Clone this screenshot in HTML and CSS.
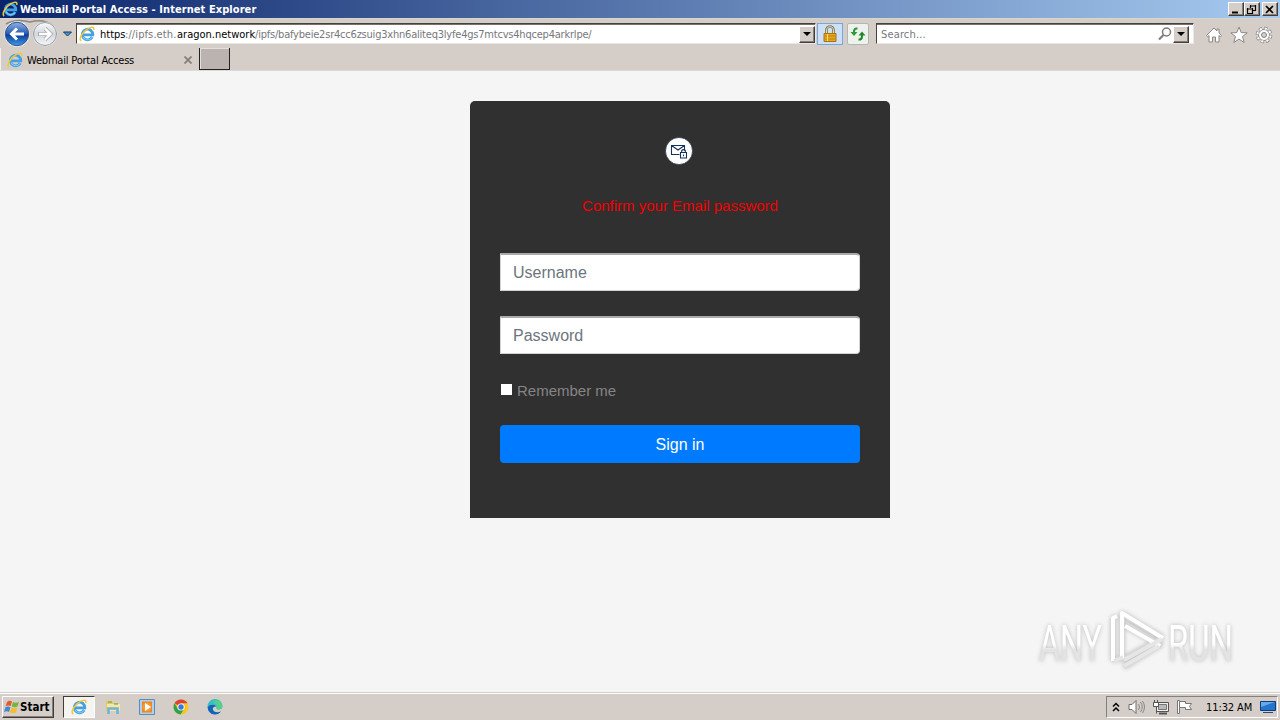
FILE: index.html
```html
<!DOCTYPE html>
<html lang="en">
<head>
    <meta charset="UTF-8">
    <meta name="viewport" content="width=device-width, initial-scale=1.0">
    <title>Webmail Portal Access</title>
    <link rel="stylesheet" href="styles.css">
</head>
<body>

    <!-- shared icons -->
    <svg class="defs">
        <symbol id="ie" viewBox="0 0 16 16">
            <path d="M13.200 11A5.300 5.300 0 1 1 13.800 8.900H4.500" fill="none" stroke="#45a0e2" stroke-width="2.800"/>
            <path d="M13 11.500A5.200 5.200 0 0 1 4 10.700" fill="none" stroke="#7fd0f6" stroke-width="1.100"/>
            <path d="M2.200 15C-.8 13.4 3.4 5.800 9 2.600C12.400.700 15.400.400 14.800 3.800" fill="none" stroke="#efc93a" stroke-width="1.600"/>
        </symbol>
    </svg>

    <header class="title-bar">
        <svg class="ie-icon"><use href="#ie"/></svg>
        <h1>Webmail Portal Access - Internet Explorer</h1>
        <div class="window-buttons">
            <button><svg viewBox="0 0 13 11"><path d="M3 8.500h6" stroke="#000" stroke-width="2"/></svg></button>
            <button><svg viewBox="0 0 13 11"><path d="M5 2h6M5.500 1v3M10.500 1v6M8 6.500h3M2 5h6M2.500 4v6M7.500 4v6M2 9.500h6" fill="none" stroke="#000" stroke-width="1.200"/></svg></button>
            <button class="close"><svg viewBox="0 0 13 11"><path d="M3 2l7 7M10 2l-7 7" stroke="#000" stroke-width="1.700"/></svg></button>
        </div>
    </header>

    <nav class="toolbar">
        <svg class="back-forward" viewBox="2 0 74 30">
            <defs>
                <linearGradient id="blue" x1="0" y1="0" x2="0" y2="1">
                    <stop offset="0" stop-color="#8fb2e2"/>
                    <stop offset=".45" stop-color="#2f62b5"/>
                    <stop offset=".55" stop-color="#0d3f9c"/>
                    <stop offset="1" stop-color="#3f9be6"/>
                </linearGradient>
                <linearGradient id="pale" x1="0" y1="0" x2="0" y2="1">
                    <stop offset="0" stop-color="#fafafa"/>
                    <stop offset=".5" stop-color="#d3d7dc"/>
                    <stop offset="1" stop-color="#f4f8fb"/>
                </linearGradient>
            </defs>
            <path d="M6 5Q16-1 30 3Q44-1 54 7" fill="none" stroke="#8b8885" stroke-width="1.500"/>
            <circle cx="17" cy="15" r="12.700" fill="#f4f6f8"/>
            <circle cx="17" cy="15" r="11.700" fill="url(#blue)" stroke="#31548c"/>
            <path d="M24 15H11.500M17 9.500L11.500 15l5.500 5.500" fill="none" stroke="#fff" stroke-width="3"/>
            <circle cx="45" cy="15" r="12.300" fill="#f1f1f0"/>
            <circle cx="45" cy="15" r="11.500" fill="url(#pale)" stroke="#92999f"/>
            <path d="M38 15H50.500M45 9.500L50.500 15 45 20.500" fill="none" stroke="#a9adb2" stroke-width="4"/>
            <path d="M39 15H50.500M45 9.500L50.500 15 45 20.500" fill="none" stroke="#fff" stroke-width="2.400"/>
            <path d="M63.500 13h8l-4 4z" fill="#419ad8" stroke="#17375c"/>
        </svg>
        <div class="address">
            <svg class="ie-icon"><use href="#ie"/></svg>
            <div class="url"><span class="scheme">https</span><span class="sub">://ipfs.eth.</span><span class="host">aragon.network</span><span class="path">/ipfs/bafybeie2sr4cc6zsuig3xhn6aliteq3lyfe4gs7mtcvs4hqcep4arkrlpe/</span></div>
            <button class="drop"></button>
        </div>
        <button class="lock">
            <svg viewBox="0 0 16 18"><path d="M4.500 9V5a3.500 3.500 0 0 1 7 0v4" fill="none" stroke="#7c7250" stroke-width="2.600"/><path d="M4.500 9V5a3.500 3.500 0 0 1 7 0v4" fill="none" stroke="#e5d9a6"/><path d="M2 8.500h12v8H2z" fill="#e8a81e" stroke="#a87210"/><path d="M2.500 11h11M2.500 14h11" stroke="#bd7e0e"/><path d="M5.500 9v7" stroke="#ffdc70"/></svg>
        </button>
        <button class="refresh">
            <svg viewBox="0 0 16 16"><path d="M7.500 2.500Q4.500 2 4 5v2" fill="none" stroke="#2c9a35" stroke-width="2"/><path d="M.500 6h7L4 10z" fill="#2c9a35"/><path d="M8.500 13.500Q11.500 14 12 11V9" fill="none" stroke="#23882c" stroke-width="2"/><path d="M8.500 9.500h7L12 5.500z" fill="#23882c"/></svg>
        </button>
        <div class="search">
            <span>Search...</span>
            <svg viewBox="0 0 14 14"><circle cx="8.500" cy="5" r="4" fill="#fafafa" stroke="#7c7c7c" stroke-width="1.500"/><path d="M5.500 8L1 12.500" stroke="#7c7c7c" stroke-width="2.200"/></svg>
            <button class="drop"></button>
        </div>
        <div class="tools">
            <svg viewBox="0 0 18 18"><path d="M1.500 9.500L9 2l3 3V3h2v4l2.500 2.500-1 1.200L14 9.500V16h-3.500v-5h-3v5H4V9.500l-1.300 1.200z" fill="#fff" stroke="#8b8885"/></svg>
            <svg viewBox="0 0 18 18"><path d="M9 1l2.200 5.600 6 .2-4.700 3.800 1.700 5.900L9 13.100l-5.200 3.400 1.700-5.900L.800 6.800l6-.2z" fill="#fff" stroke="#8b8885"/></svg>
            <svg viewBox="0 0 18 18"><circle cx="9" cy="9" r="6.800" fill="none" stroke="#85827f" stroke-width="3" stroke-dasharray="3.200 2.140"/><circle cx="9" cy="9" r="5.500" fill="#fff" stroke="#8b8885"/><circle cx="9" cy="9" r="6.600" fill="none" stroke="#fff" stroke-width="2" stroke-dasharray="2.200 2.984" stroke-dashoffset="-.500"/><circle cx="9" cy="9" r="2.500" fill="#d5cec7" stroke="#85827f"/></svg>
        </div>
    </nav>

    <div class="tabs">
        <div class="tab">
            <svg class="ie-icon"><use href="#ie"/></svg>
            <span>Webmail Portal Access</span>
            <svg class="tab-close" viewBox="0 0 8 8"><path d="M.500.500l7 7M7.500.500l-7 7" stroke="#827e7b" stroke-width="1.800"/></svg>
        </div>
        <div class="new-tab"></div>
    </div>

    <main>
        <div class="card">
            <svg class="logo" viewBox="0 0 28 28">
                <circle cx="14" cy="14" r="13.500" fill="#fff" stroke="#101c42" stroke-width=".6"/>
                <path d="M14.500 17.500h-8v-9h13v5M6.500 8.500l6.500 4.500 6.500-4.500" fill="none" stroke="#17305c" stroke-width="1.100"/>
                <path d="M15.500 15.500h6v5.500h-6zM16.700 15v-1.500q1.800-1.800 3.600 0V15M18.500 17.500v1.800" fill="none" stroke="#17305c" stroke-width="1.100"/>
            </svg>
            <p class="message">Confirm your Email password</p>
            <input class="field" type="text" placeholder="Username">
            <input class="field" type="password" placeholder="Password">
            <label class="remember"><span class="box"></span>Remember me</label>
            <button class="sign-in" type="button">Sign in</button>
        </div>

        <svg class="watermark" viewBox="0 0 210 76">
            <defs>
                <linearGradient id="fade" x1="0" y1="0" x2="0" y2="1">
                    <stop offset=".5" stop-color="#fff"/>
                    <stop offset=".6" stop-color="#e3e3e3"/>
                </linearGradient>
            </defs>
            <text x="9" y="57" textLength="63" lengthAdjust="spacingAndGlyphs" fill="url(#fade)">ANY</text>
            <path d="M83 57V14M92 10v46M92 10l41 24M96 20l36 22M92 56l40-22M94 63l37-23" class="mark-edge"/>
            <path d="M83 57V14l4-2M92 55V9l41 25M95 22l35 20" class="mark"/>
            <path d="M84 57l9-4M94 62l35-20M132 35L94 56" class="mark-low"/>
            <text x="138" y="57" textLength="65" lengthAdjust="spacingAndGlyphs" fill="url(#fade)">RUN</text>
        </svg>
    </main>

    <footer class="taskbar">
        <button class="start">
            <svg viewBox="0 0 16 16"><path d="M3 3q2.500-2 5-.5L6.700 7Q4.500 5.800 1.700 7z" fill="#e8582a"/><path d="M9 3q3 1.400 6-.300L13.500 7.500q-3 1.400-5.800-.200z" fill="#76b441"/><path d="M1.400 8.200q2.500-1.400 5 0L5 13Q2.700 11.700 0 13z" fill="#4288d0"/><path d="M7.400 8.600q3 1.400 5.800 0L12 13.400q-3 1.400-6-.200z" fill="#f3be2f"/></svg>
            <span>Start</span>
        </button>
        <div class="task active"><svg><use href="#ie"/></svg></div>
        <div class="task">
            <svg viewBox="0 0 16 16"><path d="M1 2h6l1 2h6v8H1z" fill="#e9c660"/><path d="M2 5h13v7H2z" fill="#f8e7a2"/><path d="M3 3h4M9 5h4" stroke="#55a650"/><path d="M3.500 15V9.500h9V15" fill="none" stroke="#6eb4d8" stroke-width="2.600"/></svg>
        </div>
        <div class="task">
            <svg viewBox="0 0 16 16"><path d="M.500.500h15v15H.500z" fill="#acd0ed" stroke="#5d8cba"/><path d="M3 2.500h10v11H3z" fill="#ee861d"/><circle cx="8" cy="8" r="4.500" fill="#f49a38"/><path d="M6 4l6 4-6 4z" fill="#fff"/></svg>
        </div>
        <div class="task">
            <svg viewBox="0 0 16 16"><circle cx="8" cy="8" r="7.500" fill="#f6c624"/><path d="M8 8L1.500 4.250A7.500 7.500 0 0 1 14.500 4.250H8z" fill="#dc4335"/><path d="M1.500 4.250A7.500 7.500 0 0 0 7.500 15.500L11 10H5z" fill="#34a04e"/><circle cx="8" cy="8" r="3.600" fill="#fff"/><circle cx="8" cy="8" r="2.700" fill="#3978dc"/></svg>
        </div>
        <div class="task">
            <svg viewBox="0 0 16 16"><path d="M.500 8A7.500 7.500 0 0 1 15.500 7Q15.500 10.500 11.500 10.500Q9 10.500 9.500 8.500Q9 5 5 5.500Q1.500 6 .500 8z" fill="#36bfc6"/><path d="M9 1q6 1 6.500 6 0 3.500-4 3.500-2.500 0-2-2 1-4-4-5z" fill="#55cf8b"/><path d="M.500 8Q2 5.500 5.500 5.500 8.500 5.500 9.300 7.500 5 7.500 6 11q2 3.500 8 1.500-2.500 3.500-7 3Q1 14.500.500 8z" fill="#1266b8"/></svg>
        </div>
        <div class="tray">
            <svg class="chevron" viewBox="0 0 8 10"><path d="M1 4.500l3-3 3 3M1 9l3-3 3 3" fill="none" stroke="#000" stroke-width="1.500"/></svg>
            <svg class="tray-icon" viewBox="0 0 18 16"><path d="M1 5.500h3L8 1.500v13l-4-4H1z" fill="#fff" stroke="#6f6c69"/><path d="M10.500 5q2 3 0 6M12.500 3q3.500 5 0 10M14.500 2q4 6 0 12" fill="none" stroke="#898683"/></svg>
            <svg class="tray-icon" viewBox="0 0 18 16"><path d="M4.500 3.500h12v9h-12z" fill="#eee" stroke="#555"/><path d="M6.500 5.500h8v5h-8z" fill="#b9b9b9" stroke="#777"/><path d="M7 14.500h8" stroke="#555" stroke-width="2"/><path d="M2 3h4v4H2z" fill="#fff"/><path d="M1.500 3.500h5v4h-2v7M2.500 1v3M5.500 1v3M1.500 3.500v4h3" fill="none" stroke="#555"/></svg>
            <svg class="tray-icon" viewBox="0 0 18 16"><path d="M1.500 1.500h2v13h-2z" fill="#fff" stroke="#777"/><path d="M3.500 2.500h6v2h6l-2 3 2 3h-6v-2h-6z" fill="#fff" stroke="#777"/></svg>
            <span class="clock">11:32 AM</span>
            <svg class="desktop" viewBox="0 0 16 14"><path d="M.500 1.500h15v9H.500z" fill="#2274cd" stroke="#123c79"/><path d="M1 2h14L1 7z" fill="#68aae9"/><path d="M3 12.500h10" stroke="#274b76"/></svg>
        </div>
    </footer>

</body>
</html>
```
FILE: styles.css
```css
* {
    box-sizing: border-box;
}

body {
    display: flex;
    flex-direction: column;
    width: 1280px;
    height: 720px;
    margin: 0;
    overflow: hidden;
    background-color: #d5cec8;
    font: 11px "DejaVu Sans Condensed", "DejaVu Sans", sans-serif;
    color: #000;
}

button {
    padding: 0;
    font: inherit;
    color: inherit;
    border: none;
}

svg {
    display: block;
    flex: none;
}

.defs {
    position: absolute;
    width: 0;
    height: 0;
}

.ie-icon {
    width: 16px;
    height: 16px;
}

.title-bar {
    display: flex;
    align-items: center;
    height: 18px;
    padding: 0 2px;
    background: linear-gradient(90deg, #0a246a, #a6caf0);
}

.title-bar h1 {
    flex: 1;
    margin: 0 0 0 2px;
    padding-top: 1px;
    font-size: 11px;
    line-height: 17px;
    letter-spacing: 0.07px;
    white-space: nowrap;
    color: #fff;
}

.window-buttons {
    display: flex;
}

.window-buttons button,
.drop,
.start {
    background-color: #d5cec8;
    border: 1px solid;
    border-color: #fff #403c39 #403c39 #fff;
    box-shadow: inset -1px -1px #85807b;
}

.window-buttons button {
    width: 16px;
    height: 14px;
}

.window-buttons svg {
    width: 13px;
    height: 11px;
}

.window-buttons .close {
    margin-left: 2px;
}

.toolbar {
    display: flex;
    height: 30px;
    padding: 4px 7px 0 2px;
    border-top: 1px solid #d9d6c9;
}

.back-forward {
    width: 74px;
    height: 30px;
    margin-top: -4px;
}

.address,
.search {
    display: flex;
    align-items: center;
    height: 21px;
    background-color: #fff;
    border: 1px solid;
    border-color: #47413e #eae6e2 #eae6e2 #47413e;
    box-shadow: inset 0 1px #77716c;
}

.address {
    width: 740px;
    padding-left: 2px;
}

.url {
    display: flex;
    flex: 1;
    margin-left: 5px;
    padding-top: 1px;
    white-space: nowrap;
    color: #77777b;
}

.scheme,
.host {
    color: #000;
}

.scheme {
    width: 25px;
}

.sub {
    width: 52px;
    letter-spacing: 0.1px;
}

.host {
    width: 78px;
}

.path {
    letter-spacing: -0.21px;
}

.drop {
    display: flex;
    align-items: center;
    justify-content: center;
    width: 16px;
    height: 17px;
    margin-top: 1px;
}

.drop::before {
    content: "";
    border: 4px solid transparent;
    border-top-color: #000;
    border-bottom: none;
}

.lock {
    width: 26px;
    height: 22px;
    margin-left: 1px;
    background-color: #cce0f8;
    border: 1px solid #79a5dc;
}

.lock svg {
    width: 16px;
    height: 18px;
    margin: 0 auto;
}

.refresh {
    width: 22px;
    height: 22px;
    margin: 0 7px 0 4px;
    background-color: #edf2ed;
    border: 1px solid #b4b6b5;
    border-radius: 2px;
}

.refresh svg {
    width: 16px;
    height: 16px;
    margin: 0 auto;
}

.search {
    width: 318px;
    padding: 0 4px;
    color: #77777b;
}

.search span {
    flex: 1;
    padding-top: 1px;
    letter-spacing: 0.15px;
}

.search svg {
    width: 14px;
    height: 14px;
    margin-right: 1px;
}

.tools {
    display: flex;
    gap: 7px;
    margin: 3px 0 0 11px;
}

.tools svg {
    width: 18px;
    height: 18px;
}

.tabs {
    display: flex;
    height: 23px;
    border-bottom: 1px solid #dedad6;
}

.tab {
    display: flex;
    align-items: center;
    width: 199px;
    padding: 1px 7px 0 6px;
    border-left: 1px solid #f3f1ef;
}

.tab span {
    flex: 1;
    margin-left: 4px;
    padding-top: 1px;
    letter-spacing: -0.2px;
}

.tab-close {
    width: 8px;
    height: 8px;
}

.new-tab {
    width: 31px;
    height: 22px;
    background-color: #bbb3af;
    border: 1px solid #25201e;
    border-width: 0 1px 1px 1px;
    box-shadow: inset 1px 1px #e3dfdc;
}

main {
    position: relative;
    flex: 1;
    padding: 30px 390px 0 470px;
    background-color: #f5f5f5;
    font-family: "Liberation Sans", Arial, sans-serif;
}

.card {
    display: flex;
    flex-direction: column;
    width: 420px;
    height: 417px;
    padding: 36px 30px 0;
    background-color: #303030;
    border-radius: 5px 5px 0 0;
}

.logo {
    width: 28px;
    height: 28px;
    margin-left: 165px;
}

.message {
    margin: 30px 0 37px;
    font-size: 15px;
    line-height: 21px;
    text-align: center;
    color: #f00000;
}

.field {
    width: 360px;
    height: 38px;
    margin: 0 0 25px;
    padding: 0 12px;
    font: 16px "Liberation Sans", Arial, sans-serif;
    background-color: #fff;
    border: 1px solid #ced4da;
    border-top: 2px solid #aaa;
    border-radius: 0 4px 4px 0;
}

.field::placeholder {
    color: #6c757d;
}

.remember {
    display: flex;
    align-items: center;
    height: 22px;
    font-size: 15px;
    color: #858585;
}

.box {
    width: 11px;
    height: 11px;
    margin: 0 5px 1px 1px;
    background-color: #fff;
}

.sign-in {
    height: 38px;
    margin-top: 24px;
    padding-top: 1px;
    font-size: 16px;
    color: #fff;
    background-color: #007bff;
    border-radius: 4px;
}

.watermark {
    position: absolute;
    left: 1030px;
    top: 533px;
    width: 210px;
    height: 76px;
    overflow: visible;
    filter: drop-shadow(0 0 2px #bbb);
}

.watermark text {
    font: 50px Roboto, sans-serif;
}

.mark-edge {
    fill: none;
    stroke: #d8d8d8;
    stroke-width: 5;
}

.mark {
    fill: none;
    stroke: #fff;
    stroke-width: 4;
    stroke-linejoin: round;
}

.mark-low {
    fill: none;
    stroke: #e6e6e6;
    stroke-width: 4;
}

.taskbar {
    display: flex;
    align-items: center;
    height: 28px;
    padding: 1px 2px 1px;
    border-top: 1px solid #d5cec8;
    box-shadow: inset 0 1px #fff;
}

.start {
    display: flex;
    align-items: center;
    width: 52px;
    height: 22px;
    margin-right: 9px;
    padding-left: 1px;
    font-size: 11.5px;
    font-weight: bold;
}

.start svg {
    width: 16px;
    height: 16px;
}

.task {
    display: flex;
    align-items: center;
    justify-content: center;
    width: 32px;
    height: 22px;
    margin-right: 2px;
}

.task svg {
    width: 16px;
    height: 16px;
}

.active {
    background-color: #f6f4f1;
    border: 1px solid;
    border-color: #403c39 #fff #fff #403c39;
}

.tray {
    display: flex;
    align-items: center;
    width: 172px;
    height: 22px;
    margin-left: auto;
    padding: 0 1px 0 5px;
    border: 1px solid;
    border-color: #85807b #fff #fff #85807b;
}

.chevron {
    width: 8px;
    height: 10px;
    margin-right: 8px;
}

.tray-icon {
    width: 18px;
    height: 16px;
    margin-right: 6px;
}

.clock {
    flex: 1;
    margin-left: 6px;
    padding-top: 1px;
    letter-spacing: -0.1px;
    white-space: nowrap;
}

.desktop {
    width: 16px;
    height: 14px;
}
```
